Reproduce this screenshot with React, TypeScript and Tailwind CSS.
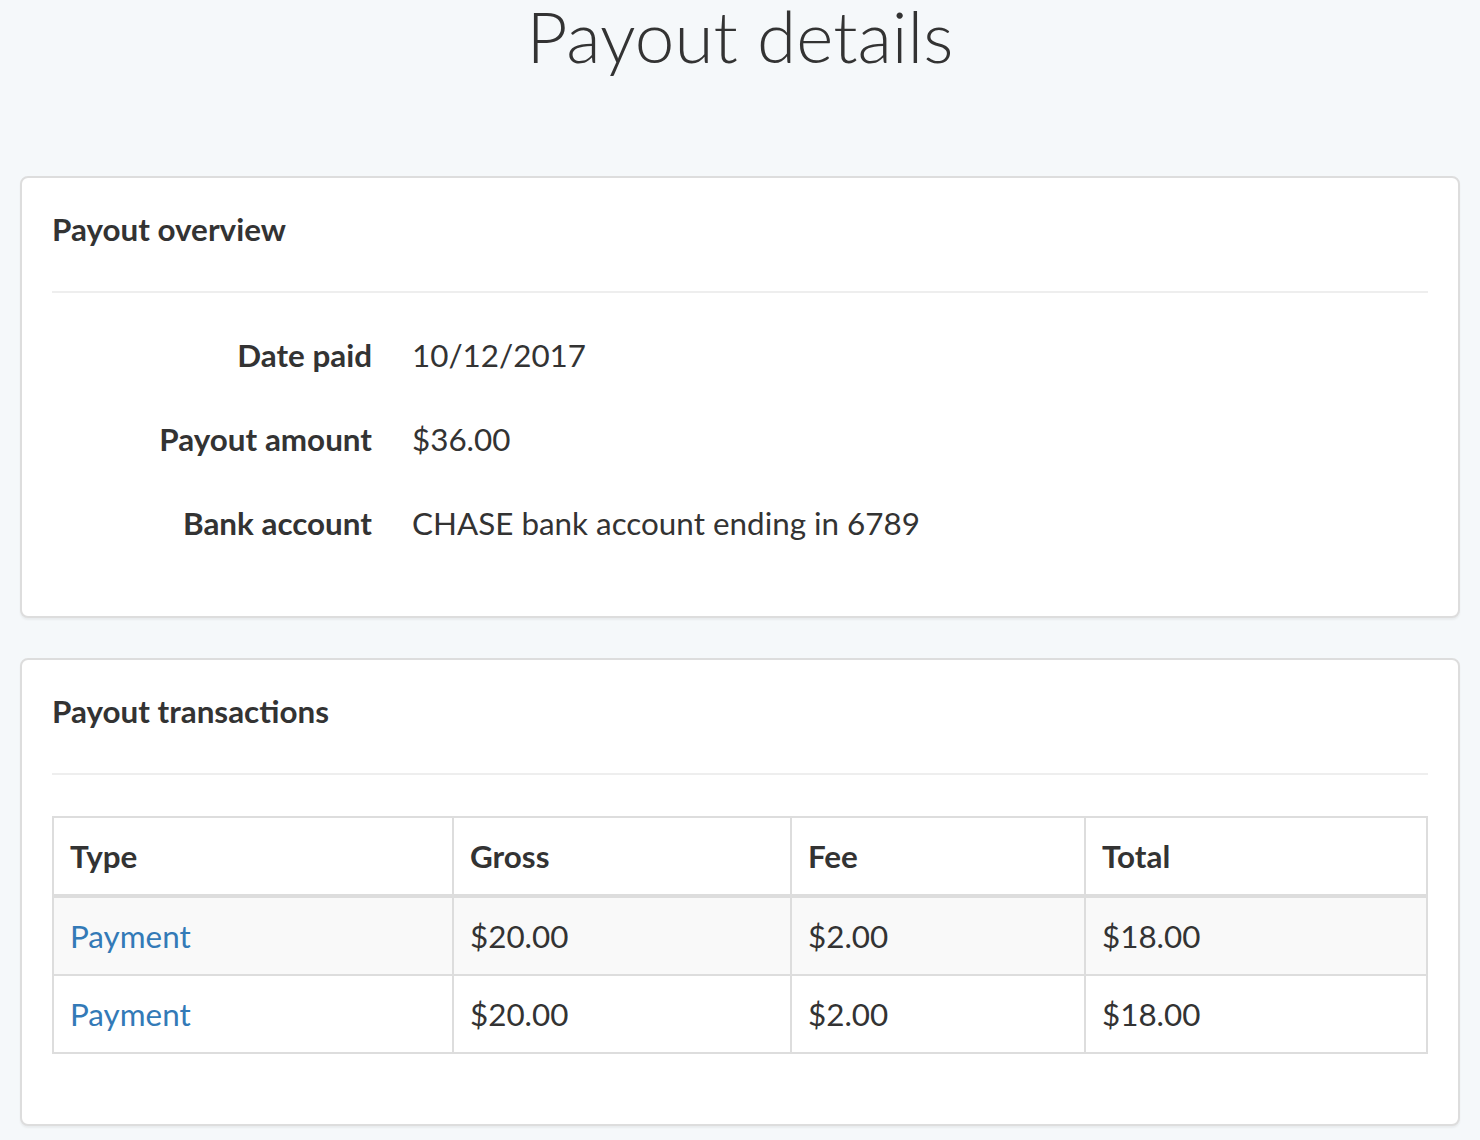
import React from 'react';

const overview = [
  { label: 'Date paid', value: '10/12/2017' },
  { label: 'Payout amount', value: '$36.00' },
  { label: 'Bank account', value: 'CHASE bank account ending in 6789' },
];

const transactions = [
  { type: 'Payment', gross: '$20.00', fee: '$2.00', total: '$18.00' },
  { type: 'Payment', gross: '$20.00', fee: '$2.00', total: '$18.00' },
];

const Panel: React.FC<{ title: string; children: React.ReactNode }> = ({ title, children }) => (
  <div className="bg-white border-2 border-[#dddddd] rounded-[8px] shadow-[0_2px_2px_rgba(0,0,0,0.05)] p-[30px]">
    <h4 className="text-[31.4px] leading-[42px] font-bold text-[#333333]">{title}</h4>
    <hr className="mt-[41px] mb-[41px] border-0 h-[2px] bg-[#eeeeee]" />
    {children}
  </div>
);

export default function App() {
  return (
    <div
      className="min-h-[1140px] bg-[#f5f8fa] px-[20px] text-[#333333]"
      style={{ fontFamily: 'Lato, "Open Sans", sans-serif' }}
    >
      <h1 className="text-center text-[71px] leading-[72px] font-light text-[#333333]">Payout details</h1>

      <div className="mt-[104px] flex flex-col gap-[40px]">
        <Panel title="Payout overview">
          <dl className="flex flex-col gap-[42px] text-[31.4px] leading-[42px] pb-[42px]">
            {overview.map((row) => (
              <div key={row.label} className="flex">
                <dt className="w-[320px] text-right font-bold">{row.label}</dt>
                <dd className="ml-[40px]">{row.value}</dd>
              </div>
            ))}
          </dl>
        </Panel>

        <Panel title="Payout transactions">
          <table className="w-full table-fixed border-collapse text-[31.4px] leading-[44px] mb-[40px]">
            <colgroup>
              <col className="w-[400px]" />
              <col className="w-[338px]" />
              <col className="w-[294px]" />
              <col />
            </colgroup>
            <thead>
              <tr>
                {['Type', 'Gross', 'Fee', 'Total'].map((h) => (
                  <th
                    key={h}
                    className="text-left font-bold px-[16px] py-[16px] border-2 border-b-4 border-[#dddddd]"
                  >
                    {h}
                  </th>
                ))}
              </tr>
            </thead>
            <tbody>
              {transactions.map((t, i) => (
                <tr key={i} className={i % 2 === 0 ? 'bg-[#f9f9f9]' : 'bg-white'}>
                  <td className="px-[16px] py-[16px] border-2 border-[#dddddd]">
                    <a href="#" className="text-[#337ab7]">{t.type}</a>
                  </td>
                  <td className="px-[16px] py-[16px] border-2 border-[#dddddd]">{t.gross}</td>
                  <td className="px-[16px] py-[16px] border-2 border-[#dddddd]">{t.fee}</td>
                  <td className="px-[16px] py-[16px] border-2 border-[#dddddd]">{t.total}</td>
                </tr>
              ))}
            </tbody>
          </table>
        </Panel>
      </div>
    </div>
  );
}
